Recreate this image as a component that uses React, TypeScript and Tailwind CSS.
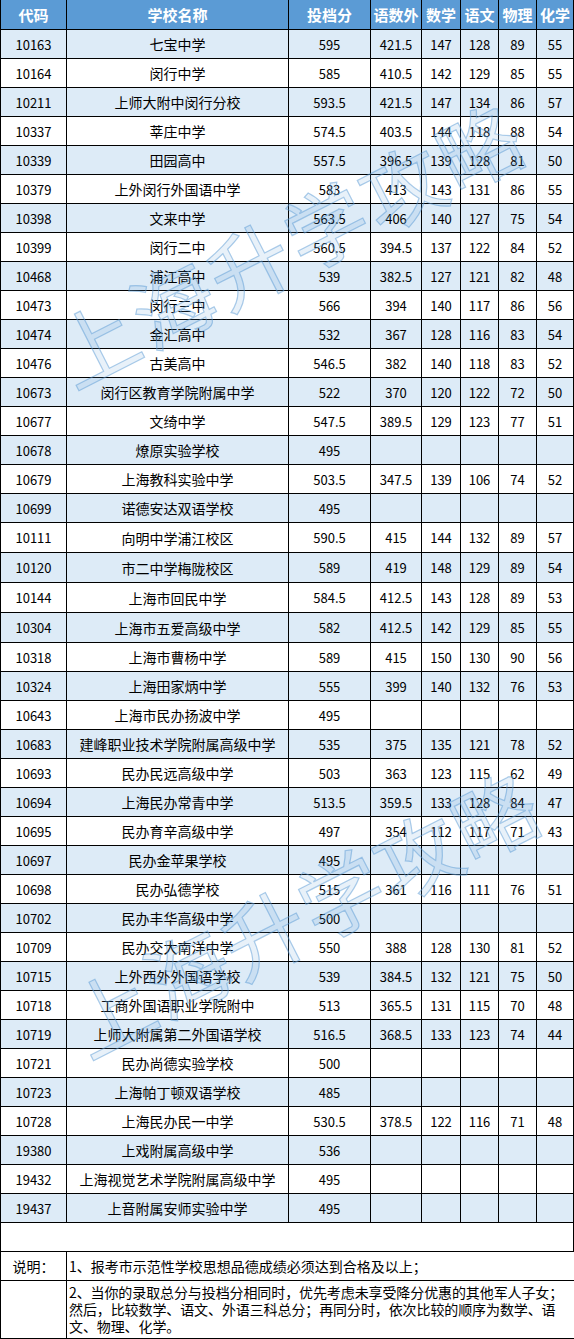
import React from "react";

const rows: string[][] = [
  ["10163", "七宝中学", "595", "421.5", "147", "128", "89", "55"],
  ["10164", "闵行中学", "585", "410.5", "142", "129", "85", "55"],
  ["10211", "上师大附中闵行分校", "593.5", "421.5", "147", "134", "86", "57"],
  ["10337", "莘庄中学", "574.5", "403.5", "144", "118", "88", "54"],
  ["10339", "田园高中", "557.5", "396.5", "139", "128", "81", "50"],
  ["10379", "上外闵行外国语中学", "583", "413", "143", "131", "86", "55"],
  ["10398", "文来中学", "563.5", "406", "140", "127", "75", "54"],
  ["10399", "闵行二中", "560.5", "394.5", "137", "122", "84", "52"],
  ["10468", "浦江高中", "539", "382.5", "127", "121", "82", "48"],
  ["10473", "闵行三中", "566", "394", "140", "117", "86", "56"],
  ["10474", "金汇高中", "532", "367", "128", "116", "83", "54"],
  ["10476", "古美高中", "546.5", "382", "140", "118", "83", "52"],
  ["10673", "闵行区教育学院附属中学", "522", "370", "120", "122", "72", "50"],
  ["10677", "文绮中学", "547.5", "389.5", "129", "123", "77", "51"],
  ["10678", "燎原实验学校", "495", "", "", "", "", ""],
  ["10679", "上海教科实验中学", "503.5", "347.5", "139", "106", "74", "52"],
  ["10699", "诺德安达双语学校", "495", "", "", "", "", ""],
  ["10111", "向明中学浦江校区", "590.5", "415", "144", "132", "89", "57"],
  ["10120", "市二中学梅陇校区", "589", "419", "148", "129", "89", "54"],
  ["10144", "上海市回民中学", "584.5", "412.5", "143", "128", "89", "53"],
  ["10304", "上海市五爱高级中学", "582", "412.5", "142", "129", "85", "55"],
  ["10318", "上海市曹杨中学", "589", "415", "150", "130", "90", "56"],
  ["10324", "上海田家炳中学", "555", "399", "140", "132", "76", "53"],
  ["10643", "上海市民办扬波中学", "495", "", "", "", "", ""],
  ["10683", "建峰职业技术学院附属高级中学", "535", "375", "135", "121", "78", "52"],
  ["10693", "民办民远高级中学", "503", "363", "123", "115", "62", "49"],
  ["10694", "上海民办常青中学", "513.5", "359.5", "133", "128", "84", "47"],
  ["10695", "民办育辛高级中学", "497", "354", "112", "117", "71", "43"],
  ["10697", "民办金苹果学校", "495", "", "", "", "", ""],
  ["10698", "民办弘德学校", "515", "361", "116", "111", "76", "51"],
  ["10702", "民办丰华高级中学", "500", "", "", "", "", ""],
  ["10709", "民办交大南洋中学", "550", "388", "128", "130", "81", "52"],
  ["10715", "上外西外外国语学校", "539", "384.5", "132", "121", "75", "50"],
  ["10718", "工商外国语职业学院附中", "513", "365.5", "131", "115", "70", "48"],
  ["10719", "上师大附属第二外国语学校", "516.5", "368.5", "133", "123", "74", "44"],
  ["10721", "民办尚德实验学校", "500", "", "", "", "", ""],
  ["10723", "上海帕丁顿双语学校", "485", "", "", "", "", ""],
  ["10728", "上海民办民一中学", "530.5", "378.5", "122", "116", "71", "48"],
  ["19380", "上戏附属高级中学", "536", "", "", "", "", ""],
  ["19432", "上海视觉艺术学院附属高级中学", "495", "", "", "", "", ""],
  ["19437", "上音附属安师实验中学", "495", "", "", "", "", ""],
];

const tallRows = new Set([17, 18, 19, 20]);

const headers = ["代码", "学校名称", "投档分", "语数外", "数学", "语文", "物理", "化学"];

const gridCols = "grid grid-cols-[66px_222px_82px_51px_39px_38px_38px_37px]";

export default function App() {
  return (
    <div className="relative w-[574px] bg-white text-black font-['Noto_Sans_CJK_SC','Noto_Sans',sans-serif]">
      {/* header */}
      <div className={`${gridCols} h-[30px] bg-[#5b9bd5] border-l border-black`}>
        {headers.map((h, i) => (
          <div
            key={i}
            className="flex items-center justify-center border-r border-b border-black text-white font-bold text-[15px] leading-none"
          >
            {h}
          </div>
        ))}
      </div>
      {rows.map((r, ri) => (
        <div
          key={ri}
          className={`${gridCols} ${tallRows.has(ri) ? "h-[30px]" : "h-[29px]"} border-l border-black ${
            ri % 2 === 0 ? "bg-[#ddebf7]" : "bg-white"
          }`}
        >
          {r.map((c, ci) => (
            <div
              key={ci}
              className={`flex items-center justify-center border-r border-b border-black leading-none whitespace-nowrap ${
                ci === 1 ? "text-[14px]" : "text-[13px]"
              }`}
            >
              {c}
            </div>
          ))}
        </div>
      ))}
      {/* empty row */}
      <div className="h-[29px] border-l border-r border-b border-black bg-white" />
      {/* notes */}
      <div className="grid grid-cols-[66px_508px] h-[29px] border-l border-black bg-white">
        <div className="flex items-center justify-center border-r border-b border-black text-[14px] leading-none">
          说明：
        </div>
        <div className="flex items-center pl-[2px] border-r border-b border-black text-[14px] leading-none whitespace-nowrap">
          1、报考市示范性学校思想品德成绩必须达到合格及以上；
        </div>
      </div>
      <div className="grid grid-cols-[66px_508px] h-[58px] border-l border-black bg-white">
        <div className="border-r border-b border-black" />
        <div className="pl-[2px] pt-[3px] border-r border-b border-black text-[14px] leading-[17px] whitespace-nowrap tracking-[-0.1px]">
          2、当你的录取总分与投档分相同时，优先考虑未享受降分优惠的其他军人子女；
          <br />
          然后，比较数学、语文、外语三科总分；再同分时，依次比较的顺序为数学、语
          <br />
          文、物理、化学。
        </div>
      </div>

      {/* watermarks */}
      <div className="pointer-events-none absolute left-[30px] top-[200px] w-[516px] h-[84px] flex items-center justify-center rotate-[-27deg] text-[82px] leading-none tracking-[4px] whitespace-nowrap text-[rgba(91,155,213,0.14)] [-webkit-text-stroke:1.2px_rgba(91,155,213,0.5)]">
        上海升学攻略
      </div>
      <div className="pointer-events-none absolute left-[44px] top-[868px] w-[516px] h-[86px] flex items-center justify-center rotate-[-27deg] text-[84px] leading-none tracking-[2px] whitespace-nowrap text-[rgba(91,155,213,0.14)] [-webkit-text-stroke:1.2px_rgba(91,155,213,0.5)]">
        上海升学攻略
      </div>
    </div>
  );
}
